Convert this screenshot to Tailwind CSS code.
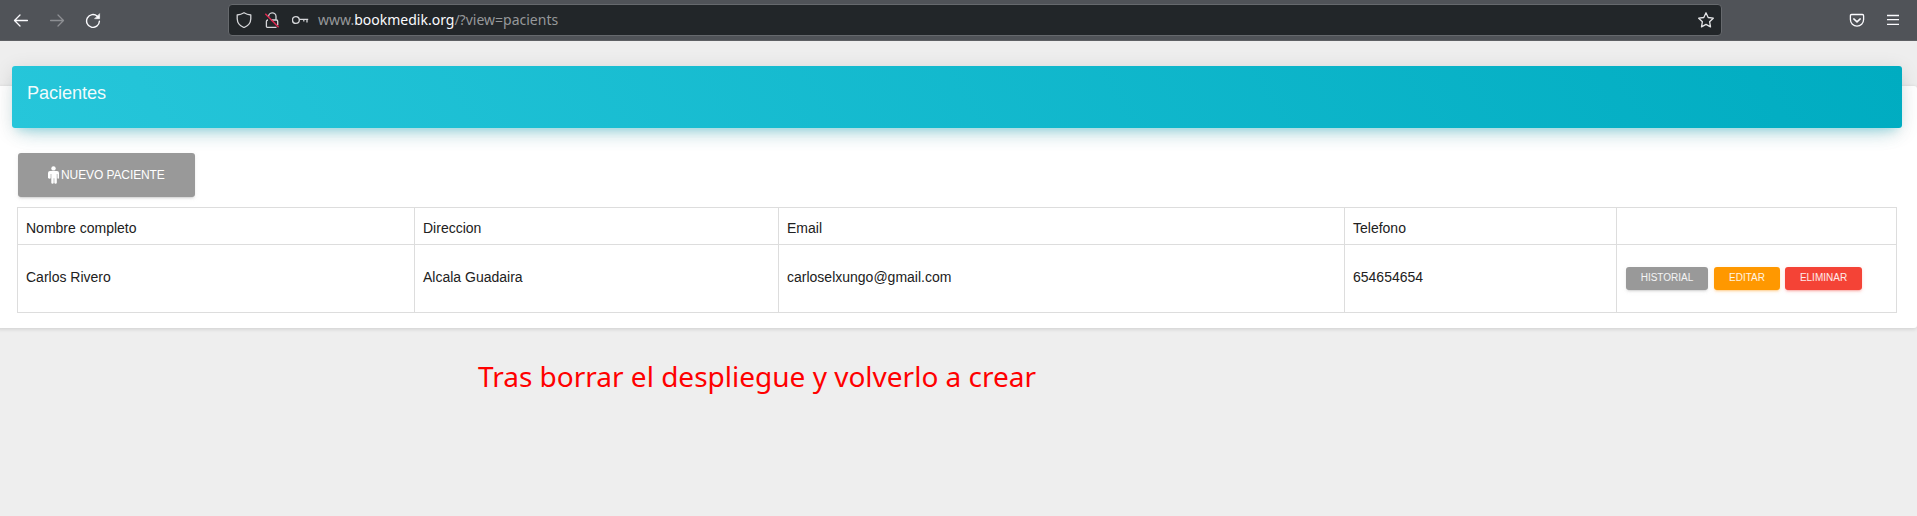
<!DOCTYPE html>
<html lang="es">
<head>
<meta charset="utf-8">
<title>Pacientes</title>
<script src="https://cdn.jsdelivr.net/npm/@tailwindcss/browser@4"></script>
</head>
<body class="h-[516px] overflow-hidden bg-[#eeeeee] font-['Liberation_Sans',Arial,sans-serif] text-[14px] text-[#212121]">
<header class="relative z-10 flex h-[41px] items-start border-b border-[#5e6064] bg-[#505358] pt-1 text-[#fbfbfe]">
  <div class="flex h-[32px] w-[228px] shrink-0 items-center pl-[13px]">
    <svg class="size-4" viewBox="0 0 16 16" fill="none" stroke="currentColor" stroke-width="1.3" stroke-linecap="round" stroke-linejoin="round"><path d="M14.4 8.5H1.8M7 3 1.5 8.5 7 14"/></svg>
    <svg class="ml-5 size-4 text-[#8d8f93]" viewBox="0 0 16 16" fill="none" stroke="currentColor" stroke-width="1.3" stroke-linecap="round" stroke-linejoin="round"><path d="M1.6 8.5h12.6M9 3l5.5 5.5L9 14"/></svg>
    <svg class="ml-5 size-4" viewBox="0 0 16 16" fill="none" stroke="currentColor" stroke-width="1.4" stroke-linecap="round"><path d="M14.4 9.200A6.400 6.400 0 1 1 12.300 4.200"/><path d="M14.600 2v4.700H9.900z" fill="currentColor" stroke-width=".6" stroke-linejoin="round"/></svg>
  </div>
  <div class="flex h-[32px] w-[1494px] items-center rounded-[4px] border border-[#66696d] bg-[#222629] pl-[7px] pr-[7px]">
    <svg class="size-4" viewBox="0 0 16 16" fill="none" stroke="#d5d6d9" stroke-width="1.3" stroke-linejoin="round"><path d="M8 .700Q11 2.400 14.800 3V6.800C14.600 11.400 11.700 14.300 8 15.500 4.300 14.300 1.400 11.400 1.200 6.800V3Q5 2.400 8 .700z"/></svg>
    <svg class="ml-3 size-4" viewBox="0 0 16 16" fill="none" stroke="#d5d6d9" stroke-width="1.3" stroke-linejoin="round"><path d="M4.600 4.800a3.700 3.700 0 0 1 7.400-.5V8M7 8h5.500q1.200 0 1.200 1.200v4M12.500 15.400H3.600q-1.200 0-1.200-1.200V9.500Q2.400 8 4 8"/><path d="M1.300 1.800 14.600 15.300" stroke="#e22850" stroke-width="1.400"/></svg>
    <svg class="ml-3 h-4 w-[17px]" viewBox="0 0 17 16" fill="none" stroke="#d5d6d9" stroke-width="1.3"><circle cx="3.900" cy="8" r="3.400"/><path d="M7.200 7.400h9M15 7.400v3.200M11.800 7.400v2"/></svg>
    <span class="ml-[9px] whitespace-pre font-['Noto_Sans',sans-serif] text-[14px] leading-none text-[#96989a]">www.<span class="text-[#fbfbfe]">bookmedik.org</span>/?view=pacients</span>
    <svg class="ml-auto size-4" viewBox="0 0 16 16" fill="none" stroke="#e4e5e7" stroke-width="1.3" stroke-linejoin="round"><path d="m8 .800 2.200 4.700 5.100.7-3.700 3.500.9 5.200L8 12.400l-4.500 2.500.9-5.200L.7 6.200l5.100-.7z"/></svg>
  </div>
  <div class="ml-auto flex h-[32px] items-center gap-5 pr-[16px]">
    <svg class="size-4" viewBox="0 0 16 16" fill="none" stroke="currentColor" stroke-width="1.3" stroke-linecap="round" stroke-linejoin="round"><path d="M2.600 2.500h10.800q1.200 0 1.200 1.200v3.800a6.600 6.600 0 0 1-13.200 0V3.700q0-1.200 1.200-1.200z"/><path d="M4.800 6.900 8 9.900l3.200-3" stroke-width="1.500"/></svg>
    <svg class="size-4" viewBox="0 0 16 16" fill="none" stroke="currentColor" stroke-width="1.3"><path d="M2 3.500h12M2 7.700h12M2 12.400h12"/></svg>
  </div>
</header>
<main class="flow-root">
  <section class="-ml-1 mt-[45px] flow-root h-[242px] rounded-[3px] bg-white pl-4 pr-[15px] shadow-[0_1px_4px_0_rgba(0,0,0,0.14)]">
    <div class="-mt-5 h-[62px] rounded-[3px] bg-[linear-gradient(60deg,#26c6da,#00acc1)] px-[15px] pt-[15px] shadow-[0_12px_20px_-10px_rgba(0,188,212,0.28),0_4px_20px_0_rgba(0,0,0,0.12),0_7px_8px_-5px_rgba(0,188,212,0.2)]">
      <h4 class="text-[18.2px] leading-[25px] tracking-[-0.1px] text-white/95">Pacientes</h4>
    </div>
    <div class="px-[5px] pt-[25px]">
      <a class="ml-px flex h-[44px] w-[177px] items-center rounded-[3px] bg-[#999999] pl-[29px] text-[12px] text-white shadow-[0_2px_2px_0_rgba(153,153,153,0.14),0_3px_1px_-2px_rgba(153,153,153,0.2),0_1px_5px_0_rgba(153,153,153,0.12)]">
        <svg class="h-[18px] w-[13px]" viewBox="0 0 13 18" fill="#fff"><circle cx="6.500" cy="2.400" r="2.200"/><path d="M3 5h7q2 0 2 2v5q0 .8-.8.8t-.8-.8V8h-.6v8.800q0 1-1.200 1t-1.300-1v-4.600h-.6v4.600q0 1-1.200 1t-1.200-1V8h-.6v4q0 .8-.9.8T1 12V7q0-2 2-2z"/></svg>
        <span class="ml-px whitespace-nowrap tracking-[-0.1px]">NUEVO PACIENTE</span>
      </a>
      <table class="mt-[10px] w-[1880px] table-fixed border-collapse border border-[#dddddd] text-left">
        <colgroup><col class="w-[397px]"><col class="w-[364px]"><col class="w-[566px]"><col class="w-[272px]"><col class="w-[280px]"></colgroup>
        <tbody>
        <tr class="h-[37px]">
          <td class="border border-[#dddddd] px-2 pt-[5px]">Nombre completo</td>
          <td class="border border-[#dddddd] px-2 pt-[5px]">Direccion</td>
          <td class="border border-[#dddddd] px-2 pt-[5px]">Email</td>
          <td class="border border-[#dddddd] px-2 pt-[5px]">Telefono</td>
          <td class="border border-[#dddddd]"></td>
        </tr>
        <tr class="h-[68px]">
          <td class="border border-[#dddddd] px-2 pb-0.5">Carlos Rivero</td>
          <td class="border border-[#dddddd] px-2 pb-0.5">Alcala Guadaira</td>
          <td class="border border-[#dddddd] px-2 pb-0.5">carloselxungo@gmail.com</td>
          <td class="border border-[#dddddd] px-2 pb-0.5">654654654</td>
          <td class="border border-[#dddddd] px-[9px]">
            <div class="flex text-[10px] leading-[21px] text-white/90">
              <a class="h-[23px] w-[82px] rounded-[3px] bg-[#999999] text-center shadow-[0_2px_2px_0_rgba(153,153,153,0.14),0_3px_1px_-2px_rgba(153,153,153,0.2),0_1px_5px_0_rgba(153,153,153,0.12)]">HISTORIAL</a>
              <a class="ml-1.5 h-[23px] w-[66px] rounded-[3px] bg-[#ff9800] text-center shadow-[0_2px_2px_0_rgba(255,152,0,0.14),0_3px_1px_-2px_rgba(255,152,0,0.2),0_1px_5px_0_rgba(255,152,0,0.12)]">EDITAR</a>
              <a class="ml-[5px] h-[23px] w-[77px] rounded-[3px] bg-[#f44336] text-center shadow-[0_2px_2px_0_rgba(244,67,54,0.14),0_3px_1px_-2px_rgba(244,67,54,0.2),0_1px_5px_0_rgba(244,67,54,0.12)]">ELIMINAR</a>
            </div>
          </td>
        </tr>
        </tbody>
      </table>
    </div>
  </section>
  <p class="ml-[478px] mt-[29px] whitespace-nowrap font-['Noto_Sans',sans-serif] text-[28px] leading-[38px] text-[#ff0000]">Tras borrar el despliegue y volverlo a crear</p>
</main>
</body>
</html>
